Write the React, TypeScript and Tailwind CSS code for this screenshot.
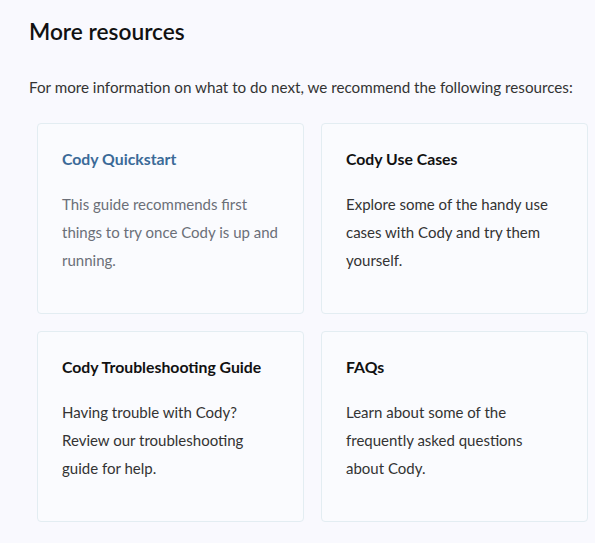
const resources = [
  {
    title: "Cody Quickstart",
    body: "This guide recommends first things to try once Cody is up and running.",
    active: true,
  },
  {
    title: "Cody Use Cases",
    body: "Explore some of the handy use cases with Cody and try them yourself.",
  },
  {
    title: "Cody Troubleshooting Guide",
    body: "Having trouble with Cody? Review our troubleshooting guide for help.",
  },
  {
    title: "FAQs",
    body: "Learn about some of the frequently asked questions about Cody.",
  },
];

export default function App() {
  return (
    <div className="min-h-screen bg-[#f9f9fe] pl-[29px] pr-[7px] pt-[18px] font-['Lato','Liberation_Sans',sans-serif] text-[#24292e]">
      <h2 className="text-[22.7px] leading-[28px] font-semibold text-[#111]">More resources</h2>
      <p className="mt-[29px] text-[15.2px] leading-[24px] text-[#333] whitespace-nowrap">
        For more information on what to do next, we recommend the following resources:
      </p>
      <div className="mt-[24px] ml-[8px] grid grid-cols-2 gap-[17px]">
        {resources.map((r) => (
          <div
            key={r.title}
            className="h-[191px] rounded-[4px] border border-[#e3edf2] bg-[#fafbfe] px-[24px] pt-[24px]"
          >
            <h3
              className={`text-[15.8px] leading-[22px] font-bold ${
                r.active ? "text-[#3b6a98]" : "text-[#111]"
              }`}
            >
              {r.title}
            </h3>
            <p
              className={`mt-[20px] text-[15px] leading-[28px] ${
                r.active ? "text-[#6b6f78]" : "text-[#333]"
              }`}
            >
              {r.body}
            </p>
          </div>
        ))}
      </div>
    </div>
  );
}
